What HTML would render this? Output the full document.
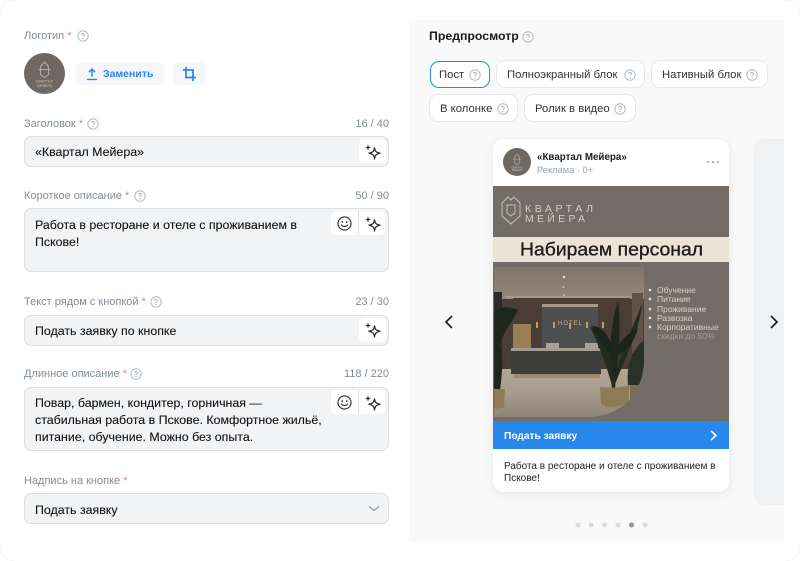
<!DOCTYPE html>
<html lang="ru"><head><meta charset="utf-8"><title>Preview</title>
<style>
html,body{margin:0;padding:0;background:#fff}
#p{position:relative;width:800px;height:561px;overflow:hidden;background:#fff;font-family:"Liberation Sans","DejaVu Sans",sans-serif}
.t{position:absolute;white-space:nowrap;line-height:14px}
.l{font-size:11px;color:#818c99}
.l i{font-style:normal;color:#f77}
.c{font-size:11px;color:#818c99;right:411px}
.f{position:absolute;left:24px;width:363px;background:#f2f3f5;border:1px solid #dcdfe3;border-radius:7px}
.v{font-size:12.4px;color:#111;left:35px;line-height:17px;-webkit-text-stroke:.1px #111}
.b{position:absolute;background:#fff;border-radius:5px}
.ch{position:absolute;box-sizing:border-box;background:#fff;border:1px solid #e7e8ec;border-radius:9px;height:28px;font-size:11.3px;color:#333;line-height:28px;padding-left:10px;white-space:nowrap}
svg{position:absolute;overflow:visible}
</style></head><body><div id="p">
<svg width="0" height="0" style="position:absolute">
<defs>
<symbol id="q" viewBox="0 0 12 12"><circle cx="6" cy="6" r="5.2" fill="none" stroke="#aeb8c4" stroke-width="1"/><path d="M4.600 4.800C4.600 3.900 5.200 3.400 6 3.400S7.400 3.900 7.400 4.700C7.400 5.700 6 5.800 6 7" fill="none" stroke="#aeb8c4" stroke-width="1"/><circle cx="6" cy="8.600" r=".6" fill="#aeb8c4"/></symbol>
<symbol id="s" viewBox="0 0 18 18"><path d="M10.500 5C11 8.300 12.200 9.500 16 10.200C12.200 11 11 12.200 10.500 16C10 12.200 8.800 11 5 10.200C8.800 9.500 10 8.300 10.500 5Z" fill="none" stroke="#2c2d2e" stroke-width="1.300" stroke-linejoin="round"/><path d="M4 1.500L4.800 3.700L7 4.500L4.800 5.300L4 7.500L3.200 5.300L1 4.500L3.200 3.700Z" fill="#2c2d2e"/></symbol>
<symbol id="e" viewBox="0 0 18 18"><circle cx="9" cy="9" r="6.900" fill="none" stroke="#2c2d2e" stroke-width="1.200"/><circle cx="6.600" cy="7.400" r=".9" fill="#2c2d2e"/><circle cx="11.400" cy="7.400" r=".9" fill="#2c2d2e"/><path d="M5.800 10.600C6.800 12.600 11.200 12.600 12.200 10.600" fill="none" stroke="#2c2d2e" stroke-width="1.200" stroke-linecap="round"/></symbol>
<symbol id="lg" viewBox="0 0 40 40"><circle cx="20" cy="20" r="20" fill="#6f6862"/><path d="M16 15C16 12 18 11 20 9C22 11 24 12 24 15V21L20 24L16 21Z" fill="none" stroke="#bdb5aa" stroke-width=".9"/><path d="M14 16H26" stroke="#bdb5aa" stroke-width=".8"/><text x="20" y="29" font-size="3.600" fill="#c8c0b5" text-anchor="middle" font-family="Liberation Sans">КВАРТАЛ</text><text x="20" y="33" font-size="3.600" fill="#c8c0b5" text-anchor="middle" font-family="Liberation Sans">МЕЙЕРА</text></symbol>
<linearGradient id="ceil" x1="0" y1="0" x2="0" y2="1"><stop offset="0" stop-color="#80756b"/><stop offset="1" stop-color="#94877b"/></linearGradient>
<linearGradient id="floor" x1="0" y1="0" x2="0" y2="1"><stop offset="0" stop-color="#b3a592"/><stop offset=".5" stop-color="#a89c8e"/><stop offset="1" stop-color="#8f8478"/></linearGradient>
<clipPath id="ph"><path d="M494 267H644V360C644 392 622 416 590 417H494Z"/></clipPath>
</defs></svg>

<!-- corners -->
<svg style="left:0;top:0" width="800" height="561" viewBox="0 0 800 561"><g fill="none" stroke="#f3f4f5" stroke-width="1"><path d="M0 15Q1 1 15 0M785 0Q799 1 800 15M0 546Q1 560 15 561M785 561Q799 560 800 546"/></g></svg>

<!-- left column -->
<span class="t l" style="left:24px;top:29px">Логотип <i>*</i></span>
<svg style="left:77px;top:30px" width="12" height="12"><use href="#q"/></svg>
<svg style="left:24px;top:53px" width="41" height="41"><use href="#lg"/></svg>
<div style="position:absolute;left:75px;top:62px;width:90px;height:23px;background:#f5f6f8;border-radius:7px"></div>
<svg style="left:85px;top:67px" width="14" height="14" viewBox="0 0 14 14"><path d="M7 10V2.200M3.800 5.200L7 2L10.200 5.200M2 12.400H12" fill="none" stroke="#2787eb" stroke-width="1.400"/></svg>
<span class="t" style="left:103px;top:67px;font-size:10.500px;font-weight:bold;color:#2b87ee">Заменить</span>
<div style="position:absolute;left:173px;top:62px;width:33px;height:23px;background:#f5f6f8;border-radius:7px"></div>
<svg style="left:182px;top:66px" width="15" height="15" viewBox="0 0 15 15"><path d="M4 1V11.500H14M1 4H11V15" fill="none" stroke="#2787eb" stroke-width="1.700"/></svg>

<span class="t l" style="left:24px;top:117px">Заголовок <i>*</i></span>
<svg style="left:87px;top:118px" width="12" height="12"><use href="#q"/></svg>
<span class="t c" style="top:117px">16 / 40</span>
<div class="f" style="top:136px;height:29px"></div>
<span class="t v" style="top:144px">«Квартал Мейера»</span>
<div class="b" style="left:359px;top:139px;width:27px;height:24px"></div>
<svg style="left:364px;top:143px" width="18" height="18"><use href="#s"/></svg>

<span class="t l" style="left:24px;top:189px">Короткое описание <i>*</i></span>
<svg style="left:134px;top:190px" width="12" height="12"><use href="#q"/></svg>
<span class="t c" style="top:189px">50 / 90</span>
<div class="f" style="top:208px;height:62px"></div>
<span class="t v" style="top:217px">Работа в ресторане и отеле с проживанием в</span>
<span class="t v" style="top:234px">Пскове!</span>
<div class="b" style="left:331px;top:211px;width:54px;height:24px"></div>
<div style="position:absolute;left:358px;top:211px;width:1px;height:24px;background:#dcdfe3"></div>
<svg style="left:336px;top:215px" width="17" height="17"><use href="#e"/></svg>
<svg style="left:364px;top:215px" width="18" height="18"><use href="#s"/></svg>

<span class="t l" style="left:24px;top:295px">Текст рядом с кнопкой <i>*</i></span>
<svg style="left:150px;top:296px" width="12" height="12"><use href="#q"/></svg>
<span class="t c" style="top:295px">23 / 30</span>
<div class="f" style="top:315px;height:29px"></div>
<span class="t v" style="top:323px">Подать заявку по кнопке</span>
<div class="b" style="left:359px;top:318px;width:27px;height:24px"></div>
<svg style="left:364px;top:321px" width="18" height="18"><use href="#s"/></svg>

<span class="t l" style="left:24px;top:367px">Длинное описание <i>*</i></span>
<svg style="left:130px;top:368px" width="12" height="12"><use href="#q"/></svg>
<span class="t c" style="top:367px">118 / 220</span>
<div class="f" style="top:387px;height:62px"></div>
<span class="t v" style="top:395px">Повар, бармен, кондитер, горничная —</span>
<span class="t v" style="top:412px">стабильная работа в Пскове. Комфортное жильё,</span>
<span class="t v" style="top:429px">питание, обучение. Можно без опыта.</span>
<div class="b" style="left:331px;top:390px;width:54px;height:24px"></div>
<div style="position:absolute;left:358px;top:390px;width:1px;height:24px;background:#dcdfe3"></div>
<svg style="left:336px;top:394px" width="17" height="17"><use href="#e"/></svg>
<svg style="left:364px;top:394px" width="18" height="18"><use href="#s"/></svg>

<span class="t l" style="left:24px;top:474px">Надпись на кнопке <i>*</i></span>
<div class="f" style="top:493px;height:29px"></div>
<span class="t v" style="top:502px">Подать заявку</span>
<svg style="left:367px;top:504px" width="14" height="10" viewBox="0 0 14 10"><path d="M2 2.500L7 6.500L12 2.500" fill="none" stroke="#99a2ad" stroke-width="1.400"/></svg>

<!-- right panel -->
<div style="position:absolute;left:409px;top:20px;width:375px;height:521px;background:#f9f9f9"></div>
<span class="t" style="left:429px;top:29px;font-size:12.300px;font-weight:bold;color:#1c1c1c">Предпросмотр</span>
<svg style="left:522px;top:31px" width="12" height="12"><use href="#q"/></svg>

<div class="ch" style="left:430px;top:61px;width:60px;height:27px;border:1.500px solid #2787eb;padding-left:8px;line-height:26px">Пост</div>
<svg style="left:469px;top:69px" width="12" height="12"><use href="#q"/></svg>
<div class="ch" style="left:496px;top:60px;width:149px">Полноэкранный блок</div>
<svg style="left:624px;top:69px" width="12" height="12"><use href="#q"/></svg>
<div class="ch" style="left:651px;top:60px;width:117px">Нативный блок</div>
<svg style="left:746px;top:69px" width="12" height="12"><use href="#q"/></svg>
<div class="ch" style="left:429px;top:94px;width:89px">В колонке</div>
<svg style="left:497px;top:103px" width="12" height="12"><use href="#q"/></svg>
<div class="ch" style="left:524px;top:94px;width:112px">Ролик в видео</div>
<svg style="left:614px;top:103px" width="12" height="12"><use href="#q"/></svg>

<!-- next card -->
<div style="position:absolute;left:754px;top:139px;width:30px;height:366px;background:#f0f1f3;border-radius:10px 0 0 10px"></div>
<svg style="left:443px;top:314px" width="12" height="16" viewBox="0 0 12 16"><path d="M9 2L3 8L9 14" fill="none" stroke="#1c1c1c" stroke-width="1.700"/></svg>
<svg style="left:768px;top:314px" width="12" height="16" viewBox="0 0 12 16"><path d="M3 2L9 8L3 14" fill="none" stroke="#1c1c1c" stroke-width="1.700"/></svg>

<!-- card -->
<div style="position:absolute;left:493px;top:139px;width:236px;height:353px;background:#fff;border-radius:11px;box-shadow:0 2px 10px rgba(0,0,0,.08)"></div>
<svg style="left:503px;top:148px" width="28" height="28"><use href="#lg"/></svg>
<span class="t" style="left:537px;top:151px;font-size:9.800px;font-weight:bold;color:#1c1c1c">«Квартал Мейера»</span>
<span class="t" style="left:537px;top:163px;font-size:9.300px;color:#9aa3ae">Реклама · 0+</span>
<svg style="left:706px;top:160px" width="14" height="4"><circle cx="2" cy="2" r="1" fill="#99a2ad"/><circle cx="7" cy="2" r="1" fill="#99a2ad"/><circle cx="12" cy="2" r="1" fill="#99a2ad"/></svg>

<!-- ad image -->
<svg style="left:0;top:0" width="800" height="561" viewBox="0 0 800 561">
<rect x="493" y="186" width="236" height="235" fill="#746c66"/>
<rect x="493" y="237" width="236" height="25" fill="#ede2d6"/>
<path d="M502 203L508 197L511 200L514 197L520 203V216L511 224L502 216Z" fill="none" stroke="#c9c0b4" stroke-width="1"/>
<path d="M507 205H515V213L511 216L507 213Z" fill="none" stroke="#c9c0b4" stroke-width="1"/>
<text x="525" y="212" font-size="10.500" fill="#d3cbc0" font-family="Liberation Sans" textLength="68">КВАРТАЛ</text>
<text x="525" y="222" font-size="10.500" fill="#d3cbc0" font-family="Liberation Sans" textLength="60">МЕЙЕРА</text>
<text x="520" y="255.500" font-size="18.500" fill="#1f1c1a" stroke="#1f1c1a" stroke-width=".35" font-family="Liberation Sans" textLength="183" lengthAdjust="spacingAndGlyphs">Набираем персонал</text>
<g clip-path="url(#ph)">
<rect x="494" y="267" width="150" height="33" fill="url(#ceil)"/>
<rect x="494" y="299" width="150" height="72" fill="#4a3d36"/>
<rect x="513" y="298" width="117" height="4" fill="#4f3f33"/>
<rect x="505" y="296" width="130" height="2" fill="#a4968a"/>
<rect x="494" y="292" width="8" height="80" fill="#2c2a26"/>
<rect x="632" y="293" width="11" height="60" fill="#5f5248"/>
<rect x="542" y="304" width="56" height="44" fill="#4c4e50"/>
<rect x="542" y="304" width="56" height="3" fill="#a69a88"/>
<rect x="513" y="324" width="18" height="24" fill="#9a7f55"/>
<rect x="494" y="369" width="150" height="48" fill="url(#floor)"/>
<rect x="546" y="343" width="13" height="5" fill="#a8a198"/>
<rect x="585" y="343" width="13" height="5" fill="#a8a198"/>
<rect x="511" y="348" width="90" height="3" fill="#a39c90"/>
<rect x="511" y="351" width="90" height="23" fill="#3d3e3b"/>
<rect x="514" y="374" width="86" height="4" fill="#9c8a6b"/>
<text x="558" y="325" font-size="6" letter-spacing="1" fill="#cdb78e" font-family="Liberation Sans">HOTEL</text>
<rect x="553" y="322" width="2" height="6" fill="#c39f63"/><rect x="586" y="322" width="2" height="6" fill="#c39f63"/><rect x="569" y="323" width="2" height="6" fill="#c39f63"/>
<rect x="536" y="322" width="2" height="6" fill="#c39f63"/><rect x="602" y="322" width="2" height="6" fill="#c39f63"/>
<path d="M628 385C626 365 632 350 644 340V385Z" fill="#2a3127"/>
<path d="M612 388C608 360 610 325 618 301C622 330 618 360 615 388Z" fill="#1f261b"/>
<path d="M612 386C606 362 596 340 590 326C606 334 614 358 615 386ZM614 380C620 352 632 330 642 304C640 330 624 360 616 382Z" fill="#232b1f"/>
<path d="M609 352C600 344 596 334 592 326C604 326 612 340 613 354ZM615 352C622 336 632 332 638 328C634 344 624 352 615 358Z" fill="#1d2419"/>
<path d="M600 387C606 388 622 388 630 385L628 402C620 408 606 408 601 404Z" fill="#8e7a57"/>
<path d="M630 385H640L637 396L630 402Z" fill="#7f6d4e"/>
<path d="M494 312C502 304 512 308 518 310C512 322 504 332 499 345C502 350 504 360 500 390H494Z" fill="#1f261b"/>
<path d="M494 389H505L504 407C500 409 497 409 494 408Z" fill="#8e7a57"/>
<circle cx="564" cy="277" r="1.200" fill="#e6dccc"/><circle cx="563.500" cy="287" r="1" fill="#cfc4b4"/><circle cx="564" cy="295" r="1" fill="#cfc4b4"/>
</g>
<g font-family="Liberation Sans" font-size="8.500" fill="#d8d1c7">
<circle cx="650" cy="290" r="1.300" fill="#e4e0da"/><text x="657" y="293">Обучение</text>
<circle cx="650" cy="299" r="1.300" fill="#e4e0da"/><text x="657" y="302">Питание</text>
<circle cx="650" cy="309" r="1.300" fill="#e4e0da"/><text x="657" y="312">Проживание</text>
<circle cx="650" cy="318" r="1.300" fill="#e4e0da"/><text x="657" y="321">Развозка</text>
<circle cx="650" cy="327" r="1.300" fill="#e4e0da"/><text x="657" y="330">Корпоративные</text>
<text x="657" y="339" fill="#a89f93">скидки до 50%</text>
</g>
<rect x="493" y="421" width="236" height="28" fill="#2787eb"/>
<path d="M711 431L716 435.500L711 440" fill="none" stroke="#fff" stroke-width="1.700"/>
<g fill="#d8dce2"><circle cx="578" cy="525" r="2.500"/><circle cx="591" cy="525" r="2.500"/><circle cx="604.500" cy="525" r="2.500"/><circle cx="618" cy="525" r="2.500"/><circle cx="631.500" cy="525" r="2.500" fill="#8c96a6"/><circle cx="645" cy="525" r="2.500"/></g>
</svg>
<span class="t" style="left:504px;top:430px;font-size:10.200px;font-weight:bold;color:#fff">Подать заявку</span>
<span class="t" style="left:504px;top:460px;font-size:10px;color:#222">Работа в ресторане и отеле с проживанием в</span>
<span class="t" style="left:504px;top:472px;font-size:10px;color:#222">Пскове!</span>
</div></body></html>
